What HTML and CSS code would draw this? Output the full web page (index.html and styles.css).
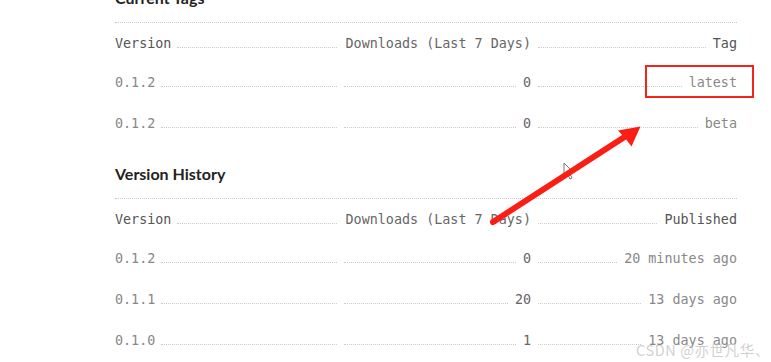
FILE: index.html
```html
<!DOCTYPE html>
<html lang="en">
<head>
    <meta charset="UTF-8">
    <title>Versions</title>
    <meta name="viewport" content="width=device-width, initial-scale=1">
    <link rel="stylesheet" href="styles.css">
</head>
<body>
<main class="versions">
    <!-- Current tags -->
    <section class="version-block">
        <h3 class="block-title">Current Tags</h3>
        <div class="vtable">
            <div class="vrow vhead">
                <div class="cell c-ver"><span>Version</span><i class="dots"></i></div>
                <div class="cell c-dl"><i class="dots"></i><span>Downloads (Last 7 Days)</span></div>
                <div class="cell c-end"><i class="dots"></i><span>Tag</span></div>
            </div>
            <div class="vrow">
                <div class="cell c-ver"><span>0.1.2</span><i class="dots"></i></div>
                <div class="cell c-dl"><i class="dots"></i><span>0</span></div>
                <div class="cell c-end"><i class="dots"></i><span>latest</span></div>
            </div>
            <div class="vrow">
                <div class="cell c-ver"><span>0.1.2</span><i class="dots"></i></div>
                <div class="cell c-dl"><i class="dots"></i><span>0</span></div>
                <div class="cell c-end"><i class="dots"></i><span>beta</span></div>
            </div>
        </div>
    </section>

    <!-- History -->
    <section class="version-block">
        <h3 class="block-title">Version History</h3>
        <div class="vtable">
            <div class="vrow vhead">
                <div class="cell c-ver"><span>Version</span><i class="dots"></i></div>
                <div class="cell c-dl"><i class="dots"></i><span>Downloads (Last 7 Days)</span></div>
                <div class="cell c-end"><i class="dots"></i><span>Published</span></div>
            </div>
            <div class="vrow">
                <div class="cell c-ver"><span>0.1.2</span><i class="dots"></i></div>
                <div class="cell c-dl"><i class="dots"></i><span>0</span></div>
                <div class="cell c-end"><i class="dots"></i><span>20 minutes ago</span></div>
            </div>
            <div class="vrow">
                <div class="cell c-ver"><span>0.1.1</span><i class="dots"></i></div>
                <div class="cell c-dl"><i class="dots"></i><span>20</span></div>
                <div class="cell c-end"><i class="dots"></i><span>13 days ago</span></div>
            </div>
            <div class="vrow">
                <div class="cell c-ver"><span>0.1.0</span><i class="dots"></i></div>
                <div class="cell c-dl"><i class="dots"></i><span>1</span></div>
                <div class="cell c-end"><i class="dots"></i><span>13 days ago</span></div>
            </div>
        </div>
    </section>
</main>

<!-- annotation layer -->
<div class="mark-box"></div>
<svg class="marks" width="771" height="362" viewBox="0 0 771 362">
    <path d="M564 163 L564 176 L567 173 L570 179 L572 178 L569 172 L573 172 Z" fill="#fff" stroke="#777" stroke-width="1"/>
    <line x1="493" y1="222" x2="626" y2="136" stroke="#fa1e14" stroke-width="6" stroke-linecap="round"/>
    <polygon points="640.5,126.5 631.5,146.5 625,138 618,130.5" fill="#fa1e14"/>
</svg>
<div class="watermark">CSDN @亦世凡华、</div>
</body>
</html>
```

FILE: styles.css
```css
body { margin: 0; background: #fff; overflow: hidden; }
.versions { width: 622px; margin: -14px 0 0 115px; }
.version-block { margin-bottom: 17px; }
.block-title {
    margin: 0;
    padding-bottom: 12px;
    font: 700 16px/24px Lato, "Noto Sans", sans-serif;
    color: #222;
    border-bottom: 1px dotted #ccc;
}
.vtable { font: 13.4px/20px "DejaVu Sans Mono", monospace; }
.vrow {
    display: grid;
    grid-template-columns: 222px 187px 1fr;
    column-gap: 7px;
    padding: 10px 0 11px;
    color: #888;
}
.vrow.vhead { padding: 11px 0 9px; color: #555; }
.cell { display: flex; align-items: baseline; white-space: nowrap; min-width: 0; }
.cell span { flex: none; }
.dots { flex: 1; min-width: 0; height: 1px; border-bottom: 1px dotted #ccc; }
.c-ver .dots { margin-left: 6px; }
.c-dl .dots, .c-end .dots { margin-right: 7px; }
.vhead .c-dl { justify-content: flex-end; color: #555; }
.vhead .c-dl .dots { display: none; }
.vrow .c-dl { color: #666; }

.mark-box {
    position: absolute;
    left: 645px;
    top: 65px;
    width: 105px;
    height: 29px;
    border: 2px solid #f5231c;
}
.marks { position: absolute; left: 0; top: 0; pointer-events: none; }
.watermark {
    position: absolute;
    left: 636px;
    top: 340px;
    font: 14.5px/20px "Noto Sans CJK SC", "Noto Sans", sans-serif;
    color: rgba(200, 200, 200, 0.85);
    letter-spacing: 0.6px;
}
```
